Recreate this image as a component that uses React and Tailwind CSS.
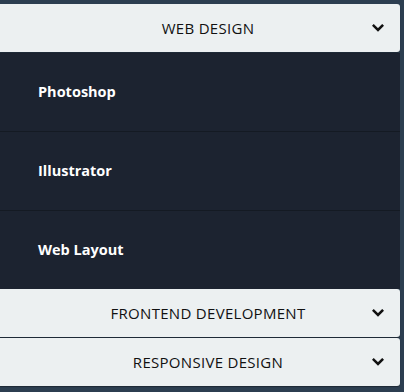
import React from "react";

function Chevron() {
  return (
    <svg width="12" height="8" viewBox="0 0 12 8" className="text-[#111]">
      <path d="M1.8 1.8 L6 6 L10.2 1.8" fill="none" stroke="currentColor" strokeWidth="2.6" strokeLinecap="square" />
    </svg>
  );
}

function Header({ label, topBorder }) {
  return (
    <div className={`relative flex h-[48px] items-center bg-[#ecf0f1] rounded-r-[3px] shadow-[0_1px_1px_rgba(0,0,0,0.35)] ${topBorder ? "mt-px" : ""}`}>
      <span className="flex-1 pl-[16px] text-center text-[15px] font-medium tracking-[0.3px] text-[#111]">{label}</span>
      <span className="absolute right-[16px] top-[20px] flex"><Chevron /></span>
    </div>
  );
}

export default function App() {
  return (
    <div className="h-[392px] w-[404px] bg-[#2c3e50] pt-[4px] pr-[4px] font-['Open_Sans',sans-serif]">
      <Header label="WEB DESIGN" />
      <div className="mt-px bg-[#1c2330]">
        {["Photoshop", "Illustrator", "Web Layout"].map((t, i) => (
          <div key={t} className={`flex ${i < 2 ? "h-[79px] border-b border-[#141a23]" : "h-[78px]"} items-center pl-[38px] text-[14.5px] font-bold text-white`}>
            {t}
          </div>
        ))}
      </div>
      <Header label="FRONTEND DEVELOPMENT" />
      <Header label="RESPONSIVE DESIGN" topBorder />
    </div>
  );
}
